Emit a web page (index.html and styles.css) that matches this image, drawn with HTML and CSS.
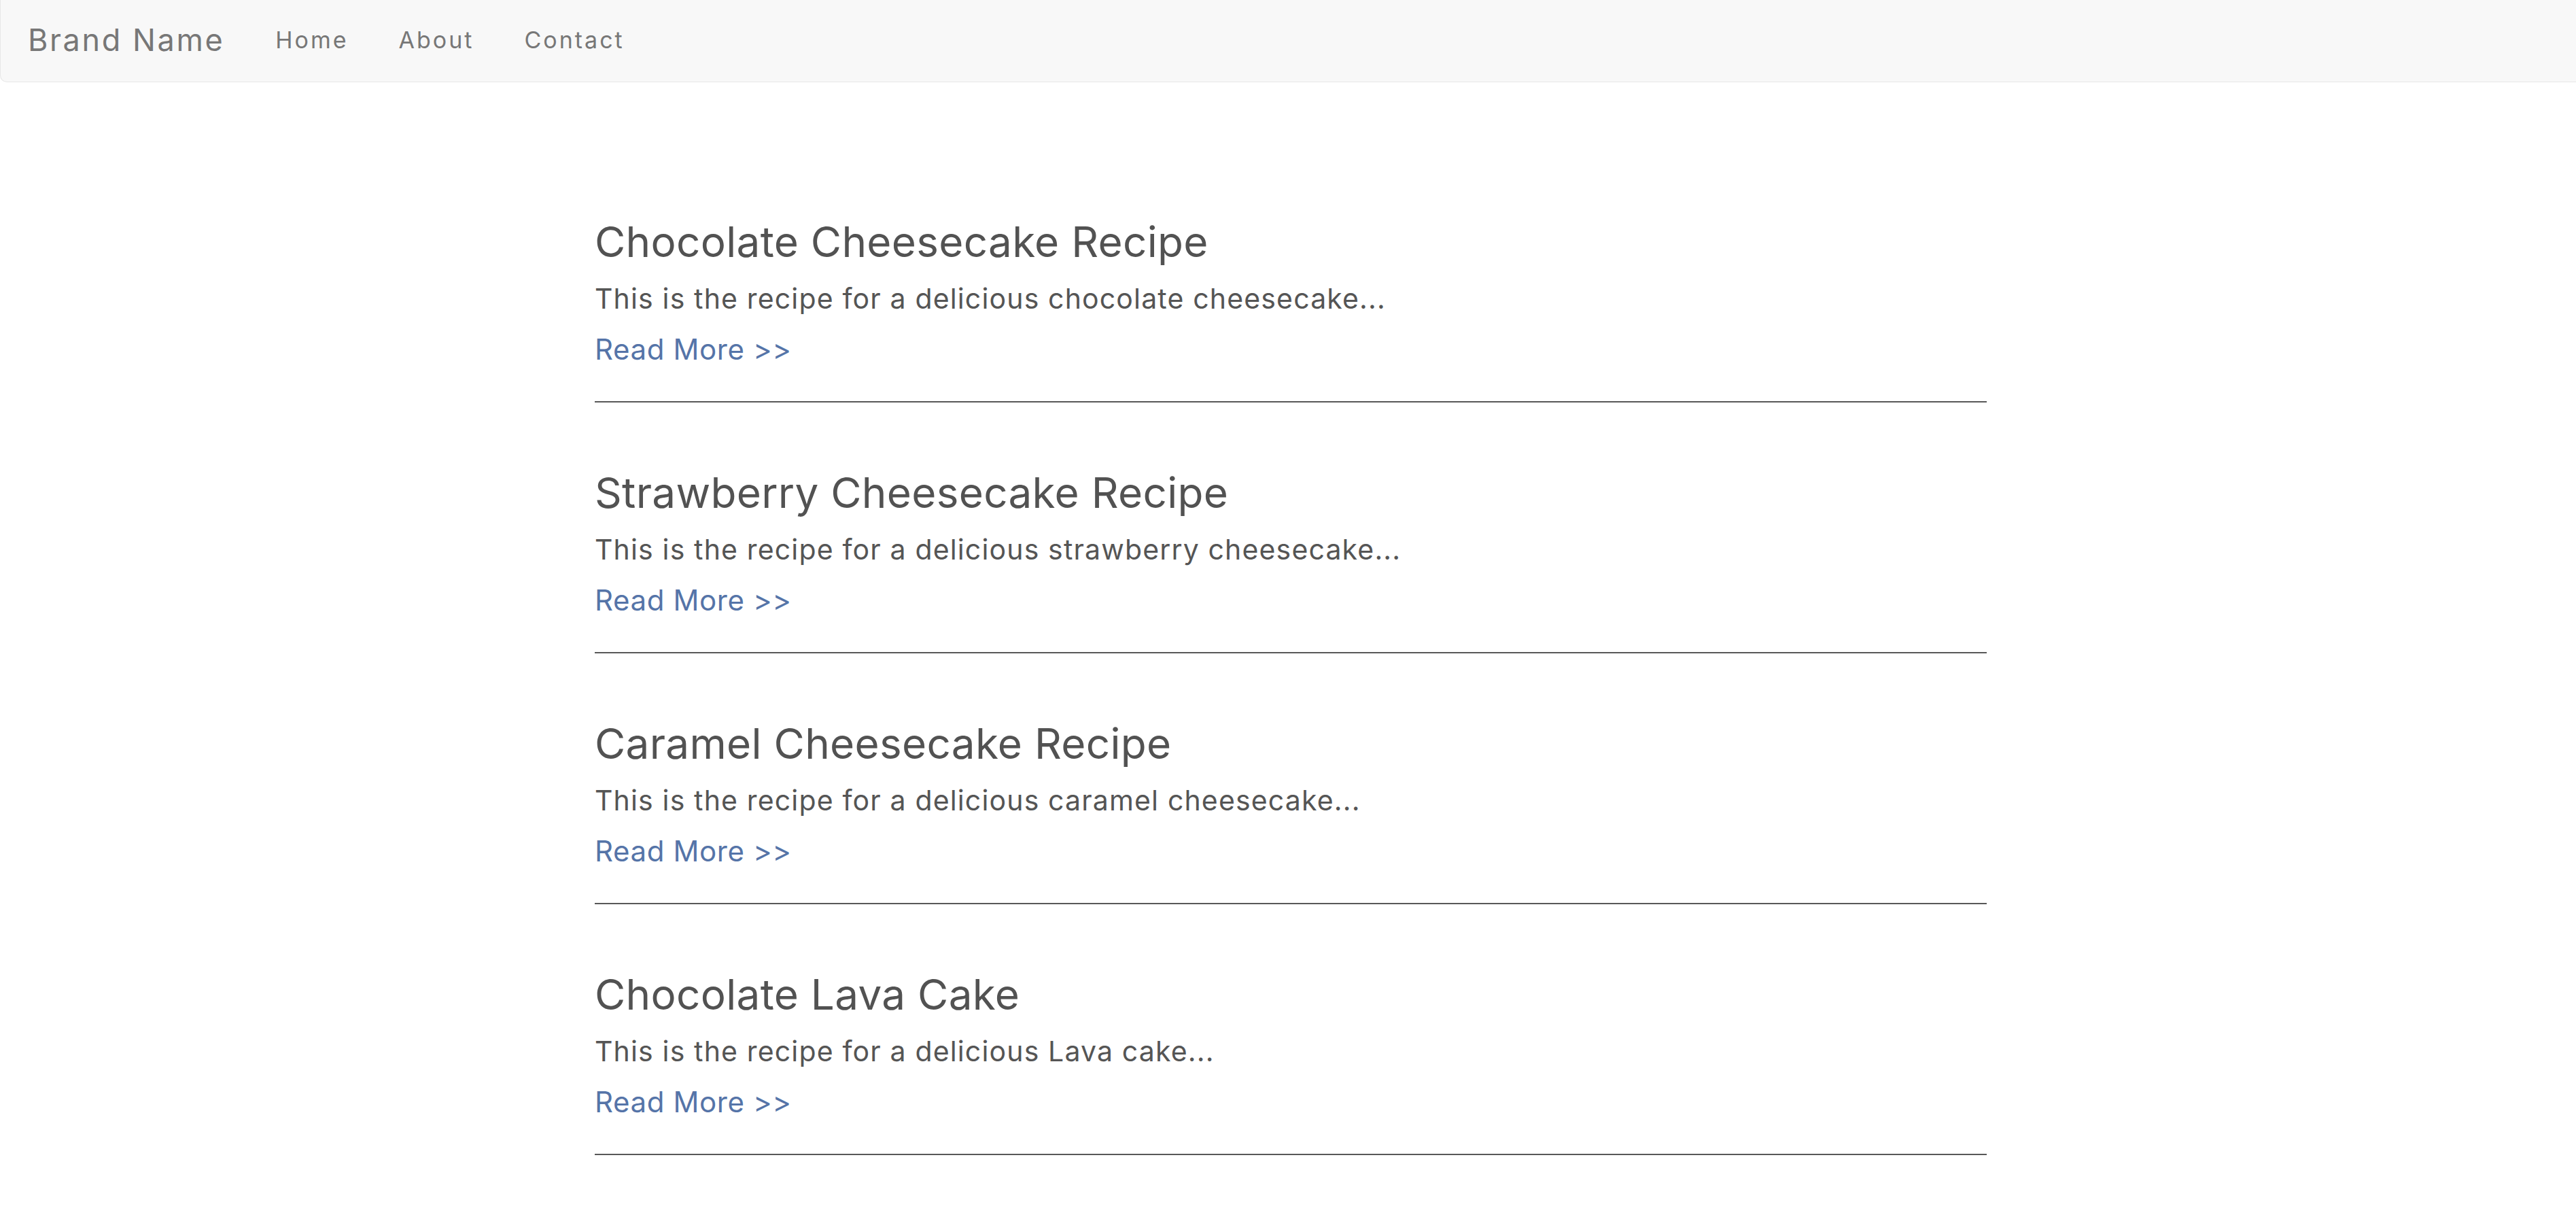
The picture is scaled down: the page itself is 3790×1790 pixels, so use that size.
FILE: index.html
```html
<!DOCTYPE html>
<html lang="en">
<head>
<meta charset="utf-8">
<title>Recipes</title>
<link rel="stylesheet" href="styles.css">
</head>
<body>
<nav class="navbar">
  <a class="brand" href="#">Brand Name</a>
  <ul class="nav-links">
    <li><a href="#">Home</a></li>
    <li><a href="#">About</a></li>
    <li><a href="#">Contact</a></li>
  </ul>
</nav>
<main class="container">
  <article class="post">
    <h2 class="post-title">Chocolate Cheesecake Recipe</h2>
    <p class="post-excerpt">This is the recipe for a delicious chocolate cheesecake...</p>
    <a class="read-more" href="#">Read More &gt;&gt;</a>
    <hr class="divider">
  </article>
  <article class="post">
    <h2 class="post-title">Strawberry Cheesecake Recipe</h2>
    <p class="post-excerpt">This is the recipe for a delicious strawberry cheesecake...</p>
    <a class="read-more" href="#">Read More &gt;&gt;</a>
    <hr class="divider">
  </article>
  <article class="post">
    <h2 class="post-title">Caramel Cheesecake Recipe</h2>
    <p class="post-excerpt">This is the recipe for a delicious caramel cheesecake...</p>
    <a class="read-more" href="#">Read More &gt;&gt;</a>
    <hr class="divider">
  </article>
  <article class="post">
    <h2 class="post-title">Chocolate Lava Cake</h2>
    <p class="post-excerpt">This is the recipe for a delicious Lava cake...</p>
    <a class="read-more" href="#">Read More &gt;&gt;</a>
    <hr class="divider">
  </article>
</main>
</body>
</html>
```
FILE: styles.css
```css
html, body {
  margin: 0;
  padding: 0;
  background: #ffffff;
}

body {
  font-family: "Inter", "Liberation Sans", sans-serif;
  color: #555555;
}

.navbar {
  box-sizing: border-box;
  height: 121px;
  display: flex;
  align-items: center;
  padding: 0 0 3px 40px;
  background: #f8f8f8;
  border: 1px solid #e7e7e7;
  border-top-width: 0;
  border-right-width: 0;
  border-radius: 0 0 0 10px;
}

.brand {
  font-size: 45px;
  line-height: 55px;
  letter-spacing: 2.6px;
  color: #777777;
  text-decoration: none;
  margin-right: 75px;
}

.nav-links {
  list-style: none;
  margin: 0;
  padding: 0;
  display: flex;
  gap: 74px;
}

.nav-links a {
  font-size: 34px;
  line-height: 41px;
  letter-spacing: 3px;
  color: #777777;
  text-decoration: none;
}

.container {
  width: 2048px;
  margin: 0 auto;
  padding: 197px 0 0 8px;
}

.post-title {
  margin: 0;
  font-size: 62px;
  line-height: 75px;
  font-weight: 400;
  letter-spacing: 0.3px;
  color: #525252;
}

.post-excerpt {
  margin: 21px 0 0;
  font-size: 41px;
  line-height: 50px;
  letter-spacing: 1.15px;
  color: #555555;
}

.read-more {
  display: block;
  width: max-content;
  margin-top: 24px;
  font-size: 42px;
  line-height: 51px;
  letter-spacing: 0.6px;
  color: #5574a8;
  text-decoration: none;
}

.divider {
  margin: 51px 0 95px;
  height: 2px;
  border: 0;
  background: #585858;
}
```
